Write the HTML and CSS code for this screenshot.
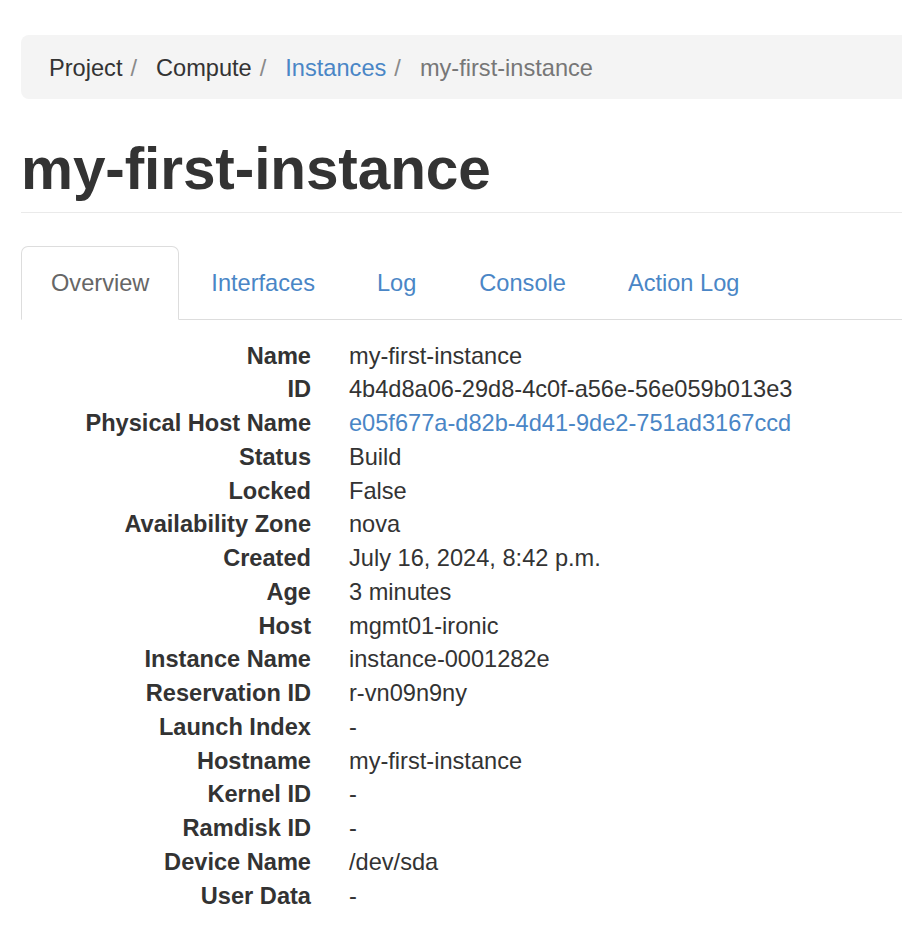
FILE: index.html
```html
<!DOCTYPE html>
<html lang="en">
<head>
<meta charset="utf-8">
<title>my-first-instance</title>
<link rel="stylesheet" href="styles.css">
</head>
<body>
<div class="page">
  <ol class="breadcrumb">
    <li>Project</li>
    <li>Compute</li>
    <li><a href="#">Instances</a></li>
    <li class="active">my-first-instance</li>
  </ol>

  <div class="page-header">
    <h1>my-first-instance</h1>
  </div>

  <ul class="nav-tabs">
    <li class="active"><a href="#">Overview</a></li>
    <li><a href="#">Interfaces</a></li>
    <li><a href="#">Log</a></li>
    <li><a href="#">Console</a></li>
    <li><a href="#">Action Log</a></li>
  </ul>

  <dl class="details">
    <dt>Name</dt><dd>my-first-instance</dd>
    <dt>ID</dt><dd>4b4d8a06-29d8-4c0f-a56e-56e059b013e3</dd>
    <dt>Physical Host Name</dt><dd><a href="#">e05f677a-d82b-4d41-9de2-751ad3167ccd</a></dd>
    <dt>Status</dt><dd>Build</dd>
    <dt>Locked</dt><dd>False</dd>
    <dt>Availability Zone</dt><dd>nova</dd>
    <dt>Created</dt><dd>July 16, 2024, 8:42 p.m.</dd>
    <dt>Age</dt><dd>3 minutes</dd>
    <dt>Host</dt><dd>mgmt01-ironic</dd>
    <dt>Instance Name</dt><dd>instance-0001282e</dd>
    <dt>Reservation ID</dt><dd>r-vn09n9ny</dd>
    <dt>Launch Index</dt><dd>-</dd>
    <dt>Hostname</dt><dd>my-first-instance</dd>
    <dt>Kernel ID</dt><dd>-</dd>
    <dt>Ramdisk ID</dt><dd>-</dd>
    <dt>Device Name</dt><dd>/dev/sda</dd>
    <dt>User Data</dt><dd>-</dd>
  </dl>
</div>
</body>
</html>
```

FILE: styles.css
```css
html, body {
  margin: 0;
  padding: 0;
  overflow: hidden;
  background: #fff;
}

body {
  font-family: "Liberation Sans", Arial, Helvetica, sans-serif;
  font-size: 23.6px;
  line-height: 33.75px;
  color: #333;
}

a {
  color: #4a86c6;
  text-decoration: none;
}

.page {
  padding: 35px 0 0 21px;
  margin-right: -40px;
}

/* Breadcrumb */
.breadcrumb {
  list-style: none;
  margin: 0;
  padding: 17px 28px 13px;
  background: #f4f4f4;
  border-radius: 8px;
  display: flex;
  flex-wrap: nowrap;
  white-space: nowrap;
}

.breadcrumb li {
  color: #333;
}

.breadcrumb li + li::before {
  content: "/";
  color: #8a8a8a;
  padding: 0 19px 0 8px;
}

.breadcrumb .active {
  color: #777;
}

/* Header */
.page-header {
  margin: 37px 40px 0 0;
  padding-bottom: 10px;
  border-bottom: 1px solid #eaeaea;
}

.page-header h1 {
  margin: 0;
  font-size: 58.5px;
  line-height: 66px;
  font-weight: 700;
  color: #333;
  letter-spacing: -0.1px;
}

/* Tabs */
.nav-tabs {
  list-style: none;
  margin: 33px 40px 0 0;
  padding: 0;
  display: flex;
  border-bottom: 1px solid #ddd;
}

.nav-tabs li {
  margin-right: 2px;
  margin-bottom: -1px;
}

.nav-tabs a {
  display: block;
  padding: 20px 29px 18px;
  border: 1px solid transparent;
  border-radius: 7px 7px 0 0;
  color: #4a86c6;
}

.nav-tabs li:nth-child(3) a {
  padding-right: 30px;
}

.nav-tabs .active a {
  color: #666;
  background: #fff;
  border-color: #ddd;
  border-bottom-color: #fff;
}

/* Details list */
.details {
  margin: 20px 0 0 0;
  display: grid;
  grid-template-columns: 290px 1fr;
  column-gap: 38px;
}

.details dt {
  font-weight: 700;
  text-align: right;
  white-space: nowrap;
}

.details dd {
  margin: 0;
  white-space: nowrap;
}
```
